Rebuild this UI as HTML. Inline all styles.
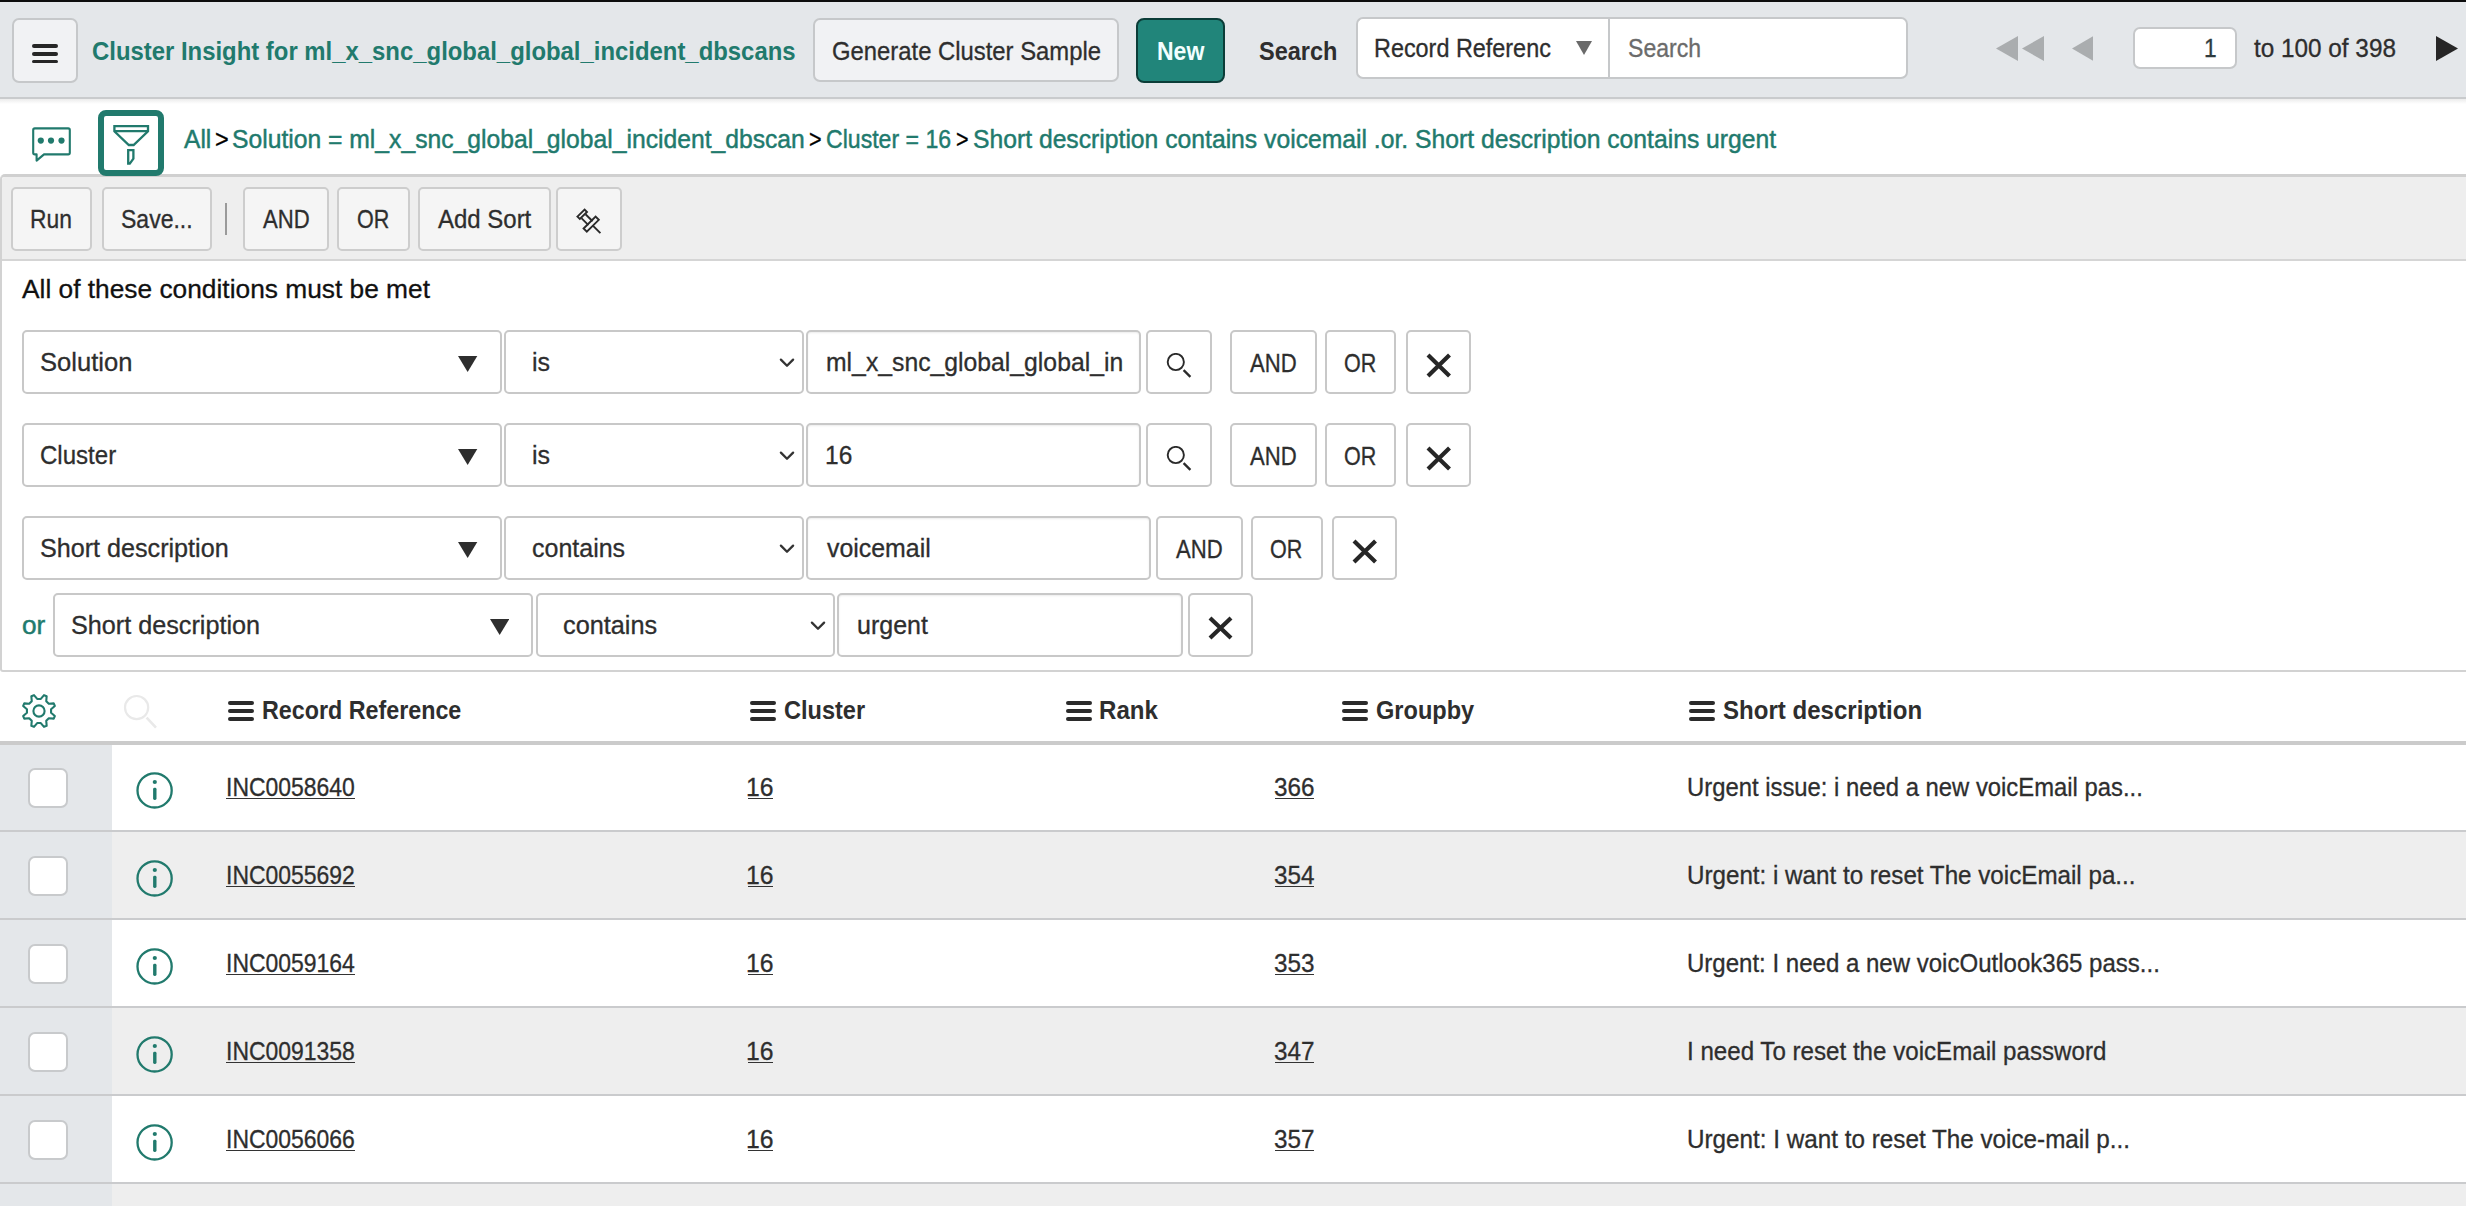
<!DOCTYPE html>
<html><head><meta charset="utf-8"><title>Cluster Insight</title>
<style>html,body{margin:0;padding:0;width:2466px;height:1206px;overflow:hidden;background:#fff;font-family:'Liberation Sans', sans-serif}</style>
</head><body>
<div style="position:relative;width:2466px;height:1206px;overflow:hidden">
<div style="position:absolute;left:0px;top:0px;width:2466px;height:2px;box-sizing:border-box;background:#0d0d0d"></div>
<div style="position:absolute;left:0px;top:2px;width:2466px;height:95px;box-sizing:border-box;background:#e4e7ea"></div>
<div style="position:absolute;left:0px;top:97px;width:2466px;height:2px;box-sizing:border-box;background:#c9cbcd"></div>
<div style="position:absolute;left:0px;top:99px;width:2466px;height:5px;box-sizing:border-box;background:linear-gradient(#ececec,#ffffff)"></div>
<div style="position:absolute;left:12px;top:18px;width:66px;height:65px;box-sizing:border-box;background:#f1f2f4;border:2px solid #c6c8ca;border-radius:7px"></div>
<div style="position:absolute;left:32px;top:44px;width:26px;height:3.6000000000000014px;box-sizing:border-box;background:#262626;border-radius:2px"></div>
<div style="position:absolute;left:32px;top:52px;width:26px;height:3.6000000000000014px;box-sizing:border-box;background:#262626;border-radius:2px"></div>
<div style="position:absolute;left:32px;top:59.6px;width:26px;height:3.6000000000000014px;box-sizing:border-box;background:#262626;border-radius:2px"></div>
<div style="position:absolute;left:813px;top:18px;width:306px;height:64px;box-sizing:border-box;background:#f1f2f4;border:2px solid #c6c8ca;border-radius:7px"></div>
<div style="position:absolute;left:1136px;top:18px;width:89px;height:65px;box-sizing:border-box;background:#21857a;border:2px solid #0b3d38;border-radius:8px"></div>
<div style="position:absolute;left:1356px;top:17px;width:254px;height:62px;box-sizing:border-box;background:#fff;border:2px solid #c6c8ca;border-right:none;border-radius:7px 0 0 7px"></div>
<div style="position:absolute;left:1608px;top:17px;width:300px;height:62px;box-sizing:border-box;background:#fff;border:2px solid #c6c8ca;border-radius:0 7px 7px 0"></div>
<svg style="position:absolute;left:1576px;top:41px" width="16" height="14"><polygon points="0,0 16,0 8.0,14" fill="#6a6a6a"/></svg>
<svg style="position:absolute;left:1996px;top:35.5px" width="22" height="25.0"><polygon points="22,0 22,25.0 0,12.5" fill="#aaadaf"/></svg>
<svg style="position:absolute;left:2022px;top:35.5px" width="22" height="25.0"><polygon points="22,0 22,25.0 0,12.5" fill="#aaadaf"/></svg>
<svg style="position:absolute;left:2071.5px;top:35.5px" width="21.5" height="25.0"><polygon points="21.5,0 21.5,25.0 0,12.5" fill="#aaadaf"/></svg>
<div style="position:absolute;left:2133px;top:27px;width:104px;height:42px;box-sizing:border-box;background:#fff;border:2px solid #c6c8ca;border-radius:7px"></div>
<svg style="position:absolute;left:2436px;top:36px" width="22" height="25"><polygon points="0,0 0,25 22,12.5" fill="#262626"/></svg>
<svg style="position:absolute;left:28px;top:124px" width="48" height="42" viewBox="28 124 48 42">
<path d="M34.8 128.4 H68.2 Q69.8 128.4 69.8 130 V152.8 Q69.8 154.4 68.2 154.4 H44 L36.6 160.6 V154.4 H34.8 Q33.2 154.4 33.2 152.8 V130 Q33.2 128.4 34.8 128.4 Z" fill="none" stroke="#217a6d" stroke-width="2.1" stroke-linejoin="round"/>
<circle cx="40.8" cy="140.6" r="3.1" fill="#217a6d"/><circle cx="51" cy="140.6" r="3.1" fill="#217a6d"/><circle cx="61.5" cy="140.6" r="3.1" fill="#217a6d"/>
</svg>
<div style="position:absolute;left:98px;top:110px;width:66px;height:66px;box-sizing:border-box;background:#fff;border:6px solid #217a6d;border-radius:8px;z-index:2"></div>
<svg style="position:absolute;left:98px;top:110px;z-index:3" width="66" height="66" viewBox="98 110 66 66">
<path d="M114.4 126.1 H148 V131.3 L133.6 145 H128.8 L114.4 131.3 Z" fill="none" stroke="#217a6d" stroke-width="2.3" stroke-linejoin="miter"/>
<line x1="114.4" y1="131.1" x2="148" y2="131.1" stroke="#217a6d" stroke-width="2.3"/>
<path d="M128.2 150.2 H133.4 V158.6 L129.8 163.6 H128.2 Z" fill="none" stroke="#217a6d" stroke-width="2.3"/>
</svg>
<div style="position:absolute;left:0px;top:174px;width:2500px;height:498px;box-sizing:border-box;background:#fff;border:2px solid #d2d2d2;border-top:3px solid #d0d0d0;border-radius:5px 0 0 3px"></div>
<div style="position:absolute;left:2px;top:177px;width:2498px;height:82px;box-sizing:border-box;background:#eeeeee;border-radius:3px 0 0 0"></div>
<div style="position:absolute;left:2px;top:259px;width:2498px;height:2px;box-sizing:border-box;background:#d5d5d5"></div>
<div style="position:absolute;left:11px;top:187px;width:81px;height:64px;box-sizing:border-box;background:#f5f5f5;border:2px solid #cdcdcd;border-radius:5px"></div>
<div style="position:absolute;left:102px;top:187px;width:110px;height:64px;box-sizing:border-box;background:#f5f5f5;border:2px solid #cdcdcd;border-radius:5px"></div>
<div style="position:absolute;left:243px;top:187px;width:86px;height:64px;box-sizing:border-box;background:#f5f5f5;border:2px solid #cdcdcd;border-radius:5px"></div>
<div style="position:absolute;left:337px;top:187px;width:73px;height:64px;box-sizing:border-box;background:#f5f5f5;border:2px solid #cdcdcd;border-radius:5px"></div>
<div style="position:absolute;left:418px;top:187px;width:133px;height:64px;box-sizing:border-box;background:#f5f5f5;border:2px solid #cdcdcd;border-radius:5px"></div>
<div style="position:absolute;left:556px;top:187px;width:66px;height:64px;box-sizing:border-box;background:#f5f5f5;border:2px solid #cdcdcd;border-radius:5px"></div>
<div style="position:absolute;left:225px;top:203px;width:2px;height:32px;box-sizing:border-box;background:#9a9a9a"></div>
<svg style="position:absolute;left:570px;top:204px" width="36" height="36" viewBox="570 204 36 36">
<g fill="none" stroke="#2a2a2a" stroke-width="1.9" stroke-linejoin="miter">
<path d="M577.4 216.6 L584.6 209.6 L587 212 L579.8 219 Z"/>
<path d="M585.5 214.2 L592.6 221.2"/>
<path d="M581.4 218.2 L588.4 225.2"/>
<path d="M583.6 228.5 L595.6 216.6 L598.8 219.8 L586.8 231.7 Z"/>
<path d="M592.6 225.4 L600.4 233.2"/>
</g></svg>
<div style="position:absolute;left:22px;top:330px;width:480px;height:64px;box-sizing:border-box;background:#fff;border:2px solid #c8c8c8;border-radius:5px"></div>
<svg style="position:absolute;left:458.3px;top:356px" width="19.30000000000001" height="16"><polygon points="0,0 19.30000000000001,0 9.650000000000006,16" fill="#2e2e2e"/></svg>
<div style="position:absolute;left:504px;top:330px;width:300px;height:64px;box-sizing:border-box;background:#fff;border:2px solid #c8c8c8;border-radius:5px"></div>
<svg style="position:absolute;left:778px;top:355px" width="18" height="14"><path d="M2.9 4.6 L9 10.8 L15.1 4.6" fill="none" stroke="#333" stroke-width="2.3" stroke-linecap="round" stroke-linejoin="round"/></svg>
<div style="position:absolute;left:806px;top:330px;width:335px;height:64px;box-sizing:border-box;background:#fff;border:2px solid #c8c8c8;border-radius:5px;box-shadow:inset 0 1px 2px rgba(0,0,0,.08)"></div>
<div style="position:absolute;left:1146px;top:330px;width:66px;height:64px;box-sizing:border-box;background:#fff;border:2px solid #c8c8c8;border-radius:5px"></div>
<svg style="position:absolute;left:1165px;top:353px" width="30" height="30" viewBox="0 0 30 30"><circle cx="10.8" cy="9" r="8.1" fill="none" stroke="#2a2a2a" stroke-width="1.9"/><path d="M18.6 17.1 L25.4 23.9" stroke="#2a2a2a" stroke-width="2.3"/></svg>
<div style="position:absolute;left:1230px;top:330px;width:87px;height:64px;box-sizing:border-box;background:#fff;border:2px solid #c8c8c8;border-radius:5px"></div>
<div style="position:absolute;left:1325px;top:330px;width:71px;height:64px;box-sizing:border-box;background:#fff;border:2px solid #c8c8c8;border-radius:5px"></div>
<div style="position:absolute;left:1406px;top:330px;width:65px;height:64px;box-sizing:border-box;background:#fff;border:2px solid #c8c8c8;border-radius:5px"></div>
<svg style="position:absolute;left:1425.5px;top:352.5px" width="25.5" height="25.0"><path d="M2 2 L23.5 23.0 M23.5 2 L2 23.0" stroke="#262626" stroke-width="4.2" stroke-linecap="butt"/></svg>
<div style="position:absolute;left:22px;top:423px;width:480px;height:64px;box-sizing:border-box;background:#fff;border:2px solid #c8c8c8;border-radius:5px"></div>
<svg style="position:absolute;left:458.3px;top:449px" width="19.30000000000001" height="16"><polygon points="0,0 19.30000000000001,0 9.650000000000006,16" fill="#2e2e2e"/></svg>
<div style="position:absolute;left:504px;top:423px;width:300px;height:64px;box-sizing:border-box;background:#fff;border:2px solid #c8c8c8;border-radius:5px"></div>
<svg style="position:absolute;left:778px;top:448px" width="18" height="14"><path d="M2.9 4.6 L9 10.8 L15.1 4.6" fill="none" stroke="#333" stroke-width="2.3" stroke-linecap="round" stroke-linejoin="round"/></svg>
<div style="position:absolute;left:806px;top:423px;width:335px;height:64px;box-sizing:border-box;background:#fff;border:2px solid #c8c8c8;border-radius:5px;box-shadow:inset 0 1px 2px rgba(0,0,0,.08)"></div>
<div style="position:absolute;left:1146px;top:423px;width:66px;height:64px;box-sizing:border-box;background:#fff;border:2px solid #c8c8c8;border-radius:5px"></div>
<svg style="position:absolute;left:1165px;top:446px" width="30" height="30" viewBox="0 0 30 30"><circle cx="10.8" cy="9" r="8.1" fill="none" stroke="#2a2a2a" stroke-width="1.9"/><path d="M18.6 17.1 L25.4 23.9" stroke="#2a2a2a" stroke-width="2.3"/></svg>
<div style="position:absolute;left:1230px;top:423px;width:87px;height:64px;box-sizing:border-box;background:#fff;border:2px solid #c8c8c8;border-radius:5px"></div>
<div style="position:absolute;left:1325px;top:423px;width:71px;height:64px;box-sizing:border-box;background:#fff;border:2px solid #c8c8c8;border-radius:5px"></div>
<div style="position:absolute;left:1406px;top:423px;width:65px;height:64px;box-sizing:border-box;background:#fff;border:2px solid #c8c8c8;border-radius:5px"></div>
<svg style="position:absolute;left:1425.5px;top:445.5px" width="25.5" height="25.0"><path d="M2 2 L23.5 23.0 M23.5 2 L2 23.0" stroke="#262626" stroke-width="4.2" stroke-linecap="butt"/></svg>
<div style="position:absolute;left:22px;top:516px;width:480px;height:64px;box-sizing:border-box;background:#fff;border:2px solid #c8c8c8;border-radius:5px"></div>
<svg style="position:absolute;left:458.3px;top:542px" width="19.30000000000001" height="16"><polygon points="0,0 19.30000000000001,0 9.650000000000006,16" fill="#2e2e2e"/></svg>
<div style="position:absolute;left:504px;top:516px;width:300px;height:64px;box-sizing:border-box;background:#fff;border:2px solid #c8c8c8;border-radius:5px"></div>
<svg style="position:absolute;left:778px;top:541px" width="18" height="14"><path d="M2.9 4.6 L9 10.8 L15.1 4.6" fill="none" stroke="#333" stroke-width="2.3" stroke-linecap="round" stroke-linejoin="round"/></svg>
<div style="position:absolute;left:806px;top:516px;width:345px;height:64px;box-sizing:border-box;background:#fff;border:2px solid #c8c8c8;border-radius:5px;box-shadow:inset 0 1px 2px rgba(0,0,0,.08)"></div>
<div style="position:absolute;left:1156px;top:516px;width:87px;height:64px;box-sizing:border-box;background:#fff;border:2px solid #c8c8c8;border-radius:5px"></div>
<div style="position:absolute;left:1251px;top:516px;width:72px;height:64px;box-sizing:border-box;background:#fff;border:2px solid #c8c8c8;border-radius:5px"></div>
<div style="position:absolute;left:1332px;top:516px;width:65px;height:64px;box-sizing:border-box;background:#fff;border:2px solid #c8c8c8;border-radius:5px"></div>
<svg style="position:absolute;left:1351.5px;top:538.5px" width="25.5" height="25.0"><path d="M2 2 L23.5 23.0 M23.5 2 L2 23.0" stroke="#262626" stroke-width="4.2" stroke-linecap="butt"/></svg>
<div style="position:absolute;left:53px;top:593px;width:480px;height:64px;box-sizing:border-box;background:#fff;border:2px solid #c8c8c8;border-radius:5px"></div>
<svg style="position:absolute;left:489.5px;top:619px" width="19.30000000000001" height="16"><polygon points="0,0 19.30000000000001,0 9.650000000000006,16" fill="#2e2e2e"/></svg>
<div style="position:absolute;left:536px;top:593px;width:299px;height:64px;box-sizing:border-box;background:#fff;border:2px solid #c8c8c8;border-radius:5px"></div>
<svg style="position:absolute;left:809px;top:618px" width="18" height="14"><path d="M2.9 4.6 L9 10.8 L15.1 4.6" fill="none" stroke="#333" stroke-width="2.3" stroke-linecap="round" stroke-linejoin="round"/></svg>
<div style="position:absolute;left:837px;top:593px;width:346px;height:64px;box-sizing:border-box;background:#fff;border:2px solid #c8c8c8;border-radius:5px;box-shadow:inset 0 1px 2px rgba(0,0,0,.08)"></div>
<div style="position:absolute;left:1188px;top:593px;width:65px;height:64px;box-sizing:border-box;background:#fff;border:2px solid #c8c8c8;border-radius:5px"></div>
<svg style="position:absolute;left:1208px;top:616px" width="25" height="24"><path d="M2 2 L23 22 M23 2 L2 22" stroke="#262626" stroke-width="4.2" stroke-linecap="butt"/></svg>
<svg style="position:absolute;left:18px;top:690px" width="42" height="42" viewBox="-21 -21 42 42">
<path d="M11.84 -2.94 L16.54 -1.43 L16.54 1.43 L11.84 2.94 L10.45 6.29 L12.71 10.68 L10.68 12.71 L6.29 10.45 L2.94 11.84 L1.43 16.54 L-1.43 16.54 L-2.94 11.84 L-6.29 10.45 L-10.68 12.71 L-12.71 10.68 L-10.45 6.29 L-11.84 2.94 L-16.54 1.43 L-16.54 -1.43 L-11.84 -2.94 L-10.45 -6.29 L-12.71 -10.68 L-10.68 -12.71 L-6.29 -10.45 L-2.94 -11.84 L-1.43 -16.54 L1.43 -16.54 L2.94 -11.84 L6.29 -10.45 L10.68 -12.71 L12.71 -10.68 L10.45 -6.29 Z" fill="none" stroke="#217a6d" stroke-width="2.1" stroke-linejoin="round" transform="rotate(22.5)"/>
<circle cx="0" cy="0" r="5.6" fill="none" stroke="#217a6d" stroke-width="2.1"/>
</svg>
<svg style="position:absolute;left:122px;top:694px" width="40" height="40" viewBox="0 0 40 40"><circle cx="14.6" cy="13.6" r="11.6" fill="none" stroke="#e9e9e9" stroke-width="2.2"/><path d="M24.6 23.6 L34 33.6" stroke="#e9e9e9" stroke-width="2.6"/></svg>
<div style="position:absolute;left:228px;top:701.4px;width:26px;height:3.8999999999999773px;box-sizing:border-box;background:#2b2b2b;border-radius:2px"></div>
<div style="position:absolute;left:228px;top:709.3px;width:26px;height:3.8999999999999773px;box-sizing:border-box;background:#2b2b2b;border-radius:2px"></div>
<div style="position:absolute;left:228px;top:717.1999999999999px;width:26px;height:3.8999999999999773px;box-sizing:border-box;background:#2b2b2b;border-radius:2px"></div>
<div style="position:absolute;left:750px;top:701.4px;width:26px;height:3.8999999999999773px;box-sizing:border-box;background:#2b2b2b;border-radius:2px"></div>
<div style="position:absolute;left:750px;top:709.3px;width:26px;height:3.8999999999999773px;box-sizing:border-box;background:#2b2b2b;border-radius:2px"></div>
<div style="position:absolute;left:750px;top:717.1999999999999px;width:26px;height:3.8999999999999773px;box-sizing:border-box;background:#2b2b2b;border-radius:2px"></div>
<div style="position:absolute;left:1066px;top:701.4px;width:26px;height:3.8999999999999773px;box-sizing:border-box;background:#2b2b2b;border-radius:2px"></div>
<div style="position:absolute;left:1066px;top:709.3px;width:26px;height:3.8999999999999773px;box-sizing:border-box;background:#2b2b2b;border-radius:2px"></div>
<div style="position:absolute;left:1066px;top:717.1999999999999px;width:26px;height:3.8999999999999773px;box-sizing:border-box;background:#2b2b2b;border-radius:2px"></div>
<div style="position:absolute;left:1342px;top:701.4px;width:26px;height:3.8999999999999773px;box-sizing:border-box;background:#2b2b2b;border-radius:2px"></div>
<div style="position:absolute;left:1342px;top:709.3px;width:26px;height:3.8999999999999773px;box-sizing:border-box;background:#2b2b2b;border-radius:2px"></div>
<div style="position:absolute;left:1342px;top:717.1999999999999px;width:26px;height:3.8999999999999773px;box-sizing:border-box;background:#2b2b2b;border-radius:2px"></div>
<div style="position:absolute;left:1689px;top:701.4px;width:26px;height:3.8999999999999773px;box-sizing:border-box;background:#2b2b2b;border-radius:2px"></div>
<div style="position:absolute;left:1689px;top:709.3px;width:26px;height:3.8999999999999773px;box-sizing:border-box;background:#2b2b2b;border-radius:2px"></div>
<div style="position:absolute;left:1689px;top:717.1999999999999px;width:26px;height:3.8999999999999773px;box-sizing:border-box;background:#2b2b2b;border-radius:2px"></div>
<div style="position:absolute;left:0px;top:741px;width:2466px;height:4px;box-sizing:border-box;background:#cbcbcb"></div>
<div style="position:absolute;left:0px;top:745px;width:2466px;height:85px;box-sizing:border-box;background:#ffffff"></div>
<div style="position:absolute;left:0px;top:745px;width:112px;height:85px;box-sizing:border-box;background:#e4e7ea"></div>
<div style="position:absolute;left:0px;top:830px;width:2466px;height:2px;box-sizing:border-box;background:#cacbcd"></div>
<div style="position:absolute;left:28px;top:768px;width:40px;height:40px;box-sizing:border-box;background:#fff;border:2px solid #c8cacc;border-radius:7px"></div>
<svg style="position:absolute;left:134px;top:770px" width="42" height="42" viewBox="0 0 42 42"><circle cx="20.6" cy="20.4" r="17.1" fill="none" stroke="#217a6d" stroke-width="2.3"/><circle cx="20.8" cy="12" r="2.1" fill="#217a6d"/><rect x="19.1" y="17.8" width="3.4" height="12.2" rx="1.4" fill="#217a6d"/></svg>
<div style="position:absolute;left:226px;top:798.1999999999999px;width:129px;height:1.3000000000000682px;box-sizing:border-box;background:#333"></div>
<div style="position:absolute;left:748px;top:798.1999999999999px;width:25px;height:1.3000000000000682px;box-sizing:border-box;background:#333"></div>
<div style="position:absolute;left:1275px;top:798.1999999999999px;width:39px;height:1.3000000000000682px;box-sizing:border-box;background:#333"></div>
<div style="position:absolute;left:0px;top:832px;width:2466px;height:86px;box-sizing:border-box;background:#eeeeee"></div>
<div style="position:absolute;left:0px;top:832px;width:112px;height:86px;box-sizing:border-box;background:#e4e7ea"></div>
<div style="position:absolute;left:0px;top:918px;width:2466px;height:2px;box-sizing:border-box;background:#cacbcd"></div>
<div style="position:absolute;left:28px;top:856px;width:40px;height:40px;box-sizing:border-box;background:#fff;border:2px solid #c8cacc;border-radius:7px"></div>
<svg style="position:absolute;left:134px;top:858px" width="42" height="42" viewBox="0 0 42 42"><circle cx="20.6" cy="20.4" r="17.1" fill="none" stroke="#217a6d" stroke-width="2.3"/><circle cx="20.8" cy="12" r="2.1" fill="#217a6d"/><rect x="19.1" y="17.8" width="3.4" height="12.2" rx="1.4" fill="#217a6d"/></svg>
<div style="position:absolute;left:226px;top:886.1999999999999px;width:129px;height:1.3000000000000682px;box-sizing:border-box;background:#333"></div>
<div style="position:absolute;left:748px;top:886.1999999999999px;width:25px;height:1.3000000000000682px;box-sizing:border-box;background:#333"></div>
<div style="position:absolute;left:1275px;top:886.1999999999999px;width:39px;height:1.3000000000000682px;box-sizing:border-box;background:#333"></div>
<div style="position:absolute;left:0px;top:920px;width:2466px;height:86px;box-sizing:border-box;background:#ffffff"></div>
<div style="position:absolute;left:0px;top:920px;width:112px;height:86px;box-sizing:border-box;background:#e4e7ea"></div>
<div style="position:absolute;left:0px;top:1006px;width:2466px;height:2px;box-sizing:border-box;background:#cacbcd"></div>
<div style="position:absolute;left:28px;top:944px;width:40px;height:40px;box-sizing:border-box;background:#fff;border:2px solid #c8cacc;border-radius:7px"></div>
<svg style="position:absolute;left:134px;top:946px" width="42" height="42" viewBox="0 0 42 42"><circle cx="20.6" cy="20.4" r="17.1" fill="none" stroke="#217a6d" stroke-width="2.3"/><circle cx="20.8" cy="12" r="2.1" fill="#217a6d"/><rect x="19.1" y="17.8" width="3.4" height="12.2" rx="1.4" fill="#217a6d"/></svg>
<div style="position:absolute;left:226px;top:974.1999999999999px;width:129px;height:1.3000000000000682px;box-sizing:border-box;background:#333"></div>
<div style="position:absolute;left:748px;top:974.1999999999999px;width:25px;height:1.3000000000000682px;box-sizing:border-box;background:#333"></div>
<div style="position:absolute;left:1275px;top:974.1999999999999px;width:39px;height:1.3000000000000682px;box-sizing:border-box;background:#333"></div>
<div style="position:absolute;left:0px;top:1008px;width:2466px;height:86px;box-sizing:border-box;background:#eeeeee"></div>
<div style="position:absolute;left:0px;top:1008px;width:112px;height:86px;box-sizing:border-box;background:#e4e7ea"></div>
<div style="position:absolute;left:0px;top:1094px;width:2466px;height:2px;box-sizing:border-box;background:#cacbcd"></div>
<div style="position:absolute;left:28px;top:1032px;width:40px;height:40px;box-sizing:border-box;background:#fff;border:2px solid #c8cacc;border-radius:7px"></div>
<svg style="position:absolute;left:134px;top:1034px" width="42" height="42" viewBox="0 0 42 42"><circle cx="20.6" cy="20.4" r="17.1" fill="none" stroke="#217a6d" stroke-width="2.3"/><circle cx="20.8" cy="12" r="2.1" fill="#217a6d"/><rect x="19.1" y="17.8" width="3.4" height="12.2" rx="1.4" fill="#217a6d"/></svg>
<div style="position:absolute;left:226px;top:1062.2px;width:129px;height:1.2999999999999545px;box-sizing:border-box;background:#333"></div>
<div style="position:absolute;left:748px;top:1062.2px;width:25px;height:1.2999999999999545px;box-sizing:border-box;background:#333"></div>
<div style="position:absolute;left:1275px;top:1062.2px;width:39px;height:1.2999999999999545px;box-sizing:border-box;background:#333"></div>
<div style="position:absolute;left:0px;top:1096px;width:2466px;height:86px;box-sizing:border-box;background:#ffffff"></div>
<div style="position:absolute;left:0px;top:1096px;width:112px;height:86px;box-sizing:border-box;background:#e4e7ea"></div>
<div style="position:absolute;left:0px;top:1182px;width:2466px;height:2px;box-sizing:border-box;background:#cacbcd"></div>
<div style="position:absolute;left:28px;top:1120px;width:40px;height:40px;box-sizing:border-box;background:#fff;border:2px solid #c8cacc;border-radius:7px"></div>
<svg style="position:absolute;left:134px;top:1122px" width="42" height="42" viewBox="0 0 42 42"><circle cx="20.6" cy="20.4" r="17.1" fill="none" stroke="#217a6d" stroke-width="2.3"/><circle cx="20.8" cy="12" r="2.1" fill="#217a6d"/><rect x="19.1" y="17.8" width="3.4" height="12.2" rx="1.4" fill="#217a6d"/></svg>
<div style="position:absolute;left:226px;top:1150.2px;width:129px;height:1.2999999999999545px;box-sizing:border-box;background:#333"></div>
<div style="position:absolute;left:748px;top:1150.2px;width:25px;height:1.2999999999999545px;box-sizing:border-box;background:#333"></div>
<div style="position:absolute;left:1275px;top:1150.2px;width:39px;height:1.2999999999999545px;box-sizing:border-box;background:#333"></div>
<div style="position:absolute;left:0px;top:1184px;width:2466px;height:22px;box-sizing:border-box;background:#eeeeee"></div>
<div style="position:absolute;left:0px;top:1184px;width:112px;height:22px;box-sizing:border-box;background:#e4e7ea"></div>
<span style="position:absolute;left:92.08px;top:37.90px;font:bold 26px/26px 'Liberation Sans', sans-serif;color:#217a6d;white-space:pre;transform-origin:0 0;transform:scaleX(0.9188)">Cluster Insight for ml_x_snc_global_global_incident_dbscans</span>
<span style="position:absolute;left:832.05px;top:38.75px;font:normal 25px/25px 'Liberation Sans', sans-serif;color:#2e2e2e;white-space:pre;transform-origin:0 0;transform:scaleX(0.9536);-webkit-text-stroke:0.3px #2e2e2e">Generate Cluster Sample</span>
<span style="position:absolute;left:1156.73px;top:37.90px;font:bold 26px/26px 'Liberation Sans', sans-serif;color:#f2ffff;white-space:pre;transform-origin:0 0;transform:scaleX(0.8846)">New</span>
<span style="position:absolute;left:1259.10px;top:37.90px;font:bold 26px/26px 'Liberation Sans', sans-serif;color:#2e2e2e;white-space:pre;transform-origin:0 0;transform:scaleX(0.9048)">Search</span>
<span style="position:absolute;left:1374.13px;top:35.75px;font:normal 25px/25px 'Liberation Sans', sans-serif;color:#2e2e2e;white-space:pre;transform-origin:0 0;transform:scaleX(0.9358);-webkit-text-stroke:0.3px #2e2e2e">Record Referenc</span>
<span style="position:absolute;left:1628.08px;top:35.75px;font:normal 25px/25px 'Liberation Sans', sans-serif;color:#6b6b6b;white-space:pre;transform-origin:0 0;transform:scaleX(0.9221);-webkit-text-stroke:0.3px #6b6b6b">Search</span>
<span style="position:absolute;left:2204.18px;top:35.75px;font:normal 25px/25px 'Liberation Sans', sans-serif;color:#2f3b3e;white-space:pre;transform-origin:0 0;transform:scaleX(0.9091);-webkit-text-stroke:0.3px #2f3b3e">1</span>
<span style="position:absolute;left:2254.00px;top:35.75px;font:normal 25px/25px 'Liberation Sans', sans-serif;color:#2e2e2e;white-space:pre;transform-origin:0 0;transform:scaleX(0.9724);-webkit-text-stroke:0.3px #2e2e2e">to 100 of 398</span>
<span style="position:absolute;left:184.00px;top:127.33px;font:normal 25.5px/25.5px 'Liberation Sans', sans-serif;color:#217a6d;white-space:pre;transform-origin:0 0;transform:scaleX(0.9630);-webkit-text-stroke:0.45px #217a6d">All</span>
<span style="position:absolute;left:215.08px;top:127.33px;font:normal 25.5px/25.5px 'Liberation Sans', sans-serif;color:#000;white-space:pre;transform-origin:0 0;transform:scaleX(0.9231);-webkit-text-stroke:0.3px #000">&gt;</span>
<span style="position:absolute;left:232.03px;top:127.33px;font:normal 25.5px/25.5px 'Liberation Sans', sans-serif;color:#217a6d;white-space:pre;transform-origin:0 0;transform:scaleX(0.9678);-webkit-text-stroke:0.45px #217a6d">Solution = ml_x_snc_global_global_incident_dbscan</span>
<span style="position:absolute;left:809.15px;top:127.33px;font:normal 25.5px/25.5px 'Liberation Sans', sans-serif;color:#000;white-space:pre;transform-origin:0 0;transform:scaleX(0.8462);-webkit-text-stroke:0.3px #000">&gt;</span>
<span style="position:absolute;left:826.09px;top:127.33px;font:normal 25.5px/25.5px 'Liberation Sans', sans-serif;color:#217a6d;white-space:pre;transform-origin:0 0;transform:scaleX(0.9051);-webkit-text-stroke:0.45px #217a6d">Cluster = 16</span>
<span style="position:absolute;left:956.15px;top:127.33px;font:normal 25.5px/25.5px 'Liberation Sans', sans-serif;color:#000;white-space:pre;transform-origin:0 0;transform:scaleX(0.8462);-webkit-text-stroke:0.3px #000">&gt;</span>
<span style="position:absolute;left:973.03px;top:127.33px;font:normal 25.5px/25.5px 'Liberation Sans', sans-serif;color:#217a6d;white-space:pre;transform-origin:0 0;transform:scaleX(0.9686);-webkit-text-stroke:0.45px #217a6d">Short description contains voicemail .or. Short description contains urgent</span>
<span style="position:absolute;left:30.27px;top:206.75px;font:normal 25px/25px 'Liberation Sans', sans-serif;color:#2e2e2e;white-space:pre;transform-origin:0 0;transform:scaleX(0.9140);-webkit-text-stroke:0.3px #2e2e2e">Run</span>
<span style="position:absolute;left:121.08px;top:206.75px;font:normal 25px/25px 'Liberation Sans', sans-serif;color:#2e2e2e;white-space:pre;transform-origin:0 0;transform:scaleX(0.9200);-webkit-text-stroke:0.3px #2e2e2e">Save...</span>
<span style="position:absolute;left:263.00px;top:206.75px;font:normal 25px/25px 'Liberation Sans', sans-serif;color:#2e2e2e;white-space:pre;transform-origin:0 0;transform:scaleX(0.8846);-webkit-text-stroke:0.3px #2e2e2e">AND</span>
<span style="position:absolute;left:357.14px;top:206.75px;font:normal 25px/25px 'Liberation Sans', sans-serif;color:#2e2e2e;white-space:pre;transform-origin:0 0;transform:scaleX(0.8611);-webkit-text-stroke:0.3px #2e2e2e">OR</span>
<span style="position:absolute;left:438.00px;top:206.75px;font:normal 25px/25px 'Liberation Sans', sans-serif;color:#2e2e2e;white-space:pre;transform-origin:0 0;transform:scaleX(0.9588);-webkit-text-stroke:0.3px #2e2e2e">Add Sort</span>
<span style="position:absolute;left:22.20px;top:276.38px;font:normal 26.5px/26.5px 'Liberation Sans', sans-serif;color:#111;white-space:pre;transform-origin:0 0;transform:scaleX(0.9927);-webkit-text-stroke:0.3px #111">All of these conditions must be met</span>
<span style="position:absolute;left:39.98px;top:349.75px;font:normal 25px/25px 'Liberation Sans', sans-serif;color:#2e2e2e;white-space:pre;transform-origin:0 0;transform:scaleX(1.0227);-webkit-text-stroke:0.3px #2e2e2e">Solution</span>
<span style="position:absolute;left:532.00px;top:349.75px;font:normal 25px/25px 'Liberation Sans', sans-serif;color:#2e2e2e;white-space:pre;transform-origin:0 0;transform:scaleX(1.0000);-webkit-text-stroke:0.3px #2e2e2e">is</span>
<span style="position:absolute;left:826.01px;top:349.75px;font:normal 25px/25px 'Liberation Sans', sans-serif;color:#2e2e2e;white-space:pre;transform-origin:0 0;transform:scaleX(0.9899);-webkit-text-stroke:0.3px #2e2e2e">ml_x_snc_global_global_in</span>
<span style="position:absolute;left:1250.00px;top:350.95px;font:normal 25px/25px 'Liberation Sans', sans-serif;color:#2e2e2e;white-space:pre;transform-origin:0 0;transform:scaleX(0.8846);-webkit-text-stroke:0.3px #2e2e2e">AND</span>
<span style="position:absolute;left:1344.14px;top:350.95px;font:normal 25px/25px 'Liberation Sans', sans-serif;color:#2e2e2e;white-space:pre;transform-origin:0 0;transform:scaleX(0.8611);-webkit-text-stroke:0.3px #2e2e2e">OR</span>
<span style="position:absolute;left:40.04px;top:442.75px;font:normal 25px/25px 'Liberation Sans', sans-serif;color:#2e2e2e;white-space:pre;transform-origin:0 0;transform:scaleX(0.9615);-webkit-text-stroke:0.3px #2e2e2e">Cluster</span>
<span style="position:absolute;left:532.00px;top:442.75px;font:normal 25px/25px 'Liberation Sans', sans-serif;color:#2e2e2e;white-space:pre;transform-origin:0 0;transform:scaleX(1.0000);-webkit-text-stroke:0.3px #2e2e2e">is</span>
<span style="position:absolute;left:825.04px;top:442.75px;font:normal 25px/25px 'Liberation Sans', sans-serif;color:#2e2e2e;white-space:pre;transform-origin:0 0;transform:scaleX(0.9800);-webkit-text-stroke:0.3px #2e2e2e">16</span>
<span style="position:absolute;left:1250.00px;top:443.95px;font:normal 25px/25px 'Liberation Sans', sans-serif;color:#2e2e2e;white-space:pre;transform-origin:0 0;transform:scaleX(0.8846);-webkit-text-stroke:0.3px #2e2e2e">AND</span>
<span style="position:absolute;left:1344.14px;top:443.95px;font:normal 25px/25px 'Liberation Sans', sans-serif;color:#2e2e2e;white-space:pre;transform-origin:0 0;transform:scaleX(0.8611);-webkit-text-stroke:0.3px #2e2e2e">OR</span>
<span style="position:absolute;left:39.99px;top:535.75px;font:normal 25px/25px 'Liberation Sans', sans-serif;color:#2e2e2e;white-space:pre;transform-origin:0 0;transform:scaleX(1.0054);-webkit-text-stroke:0.3px #2e2e2e">Short description</span>
<span style="position:absolute;left:532.00px;top:535.75px;font:normal 25px/25px 'Liberation Sans', sans-serif;color:#2e2e2e;white-space:pre;transform-origin:0 0;transform:scaleX(1.0000);-webkit-text-stroke:0.3px #2e2e2e">contains</span>
<span style="position:absolute;left:827.00px;top:535.75px;font:normal 25px/25px 'Liberation Sans', sans-serif;color:#2e2e2e;white-space:pre;transform-origin:0 0;transform:scaleX(0.9951);-webkit-text-stroke:0.3px #2e2e2e">voicemail</span>
<span style="position:absolute;left:1176.00px;top:536.95px;font:normal 25px/25px 'Liberation Sans', sans-serif;color:#2e2e2e;white-space:pre;transform-origin:0 0;transform:scaleX(0.8846);-webkit-text-stroke:0.3px #2e2e2e">AND</span>
<span style="position:absolute;left:1270.14px;top:536.95px;font:normal 25px/25px 'Liberation Sans', sans-serif;color:#2e2e2e;white-space:pre;transform-origin:0 0;transform:scaleX(0.8611);-webkit-text-stroke:0.3px #2e2e2e">OR</span>
<span style="position:absolute;left:22.05px;top:612.75px;font:normal 25px/25px 'Liberation Sans', sans-serif;color:#217a6d;white-space:pre;transform-origin:0 0;transform:scaleX(1.0476);-webkit-text-stroke:0.45px #217a6d">or</span>
<span style="position:absolute;left:70.99px;top:612.75px;font:normal 25px/25px 'Liberation Sans', sans-serif;color:#2e2e2e;white-space:pre;transform-origin:0 0;transform:scaleX(1.0081);-webkit-text-stroke:0.3px #2e2e2e">Short description</span>
<span style="position:absolute;left:562.99px;top:612.75px;font:normal 25px/25px 'Liberation Sans', sans-serif;color:#2e2e2e;white-space:pre;transform-origin:0 0;transform:scaleX(1.0110);-webkit-text-stroke:0.3px #2e2e2e">contains</span>
<span style="position:absolute;left:857.00px;top:612.75px;font:normal 25px/25px 'Liberation Sans', sans-serif;color:#2e2e2e;white-space:pre;transform-origin:0 0;transform:scaleX(1.0000);-webkit-text-stroke:0.3px #2e2e2e">urgent</span>
<span style="position:absolute;left:262.21px;top:696.90px;font:bold 26px/26px 'Liberation Sans', sans-serif;color:#2e2e2e;white-space:pre;transform-origin:0 0;transform:scaleX(0.8955)">Record Reference</span>
<span style="position:absolute;left:784.09px;top:696.90px;font:bold 26px/26px 'Liberation Sans', sans-serif;color:#2e2e2e;white-space:pre;transform-origin:0 0;transform:scaleX(0.9057)">Cluster</span>
<span style="position:absolute;left:1099.15px;top:696.90px;font:bold 26px/26px 'Liberation Sans', sans-serif;color:#2e2e2e;white-space:pre;transform-origin:0 0;transform:scaleX(0.9262)">Rank</span>
<span style="position:absolute;left:1376.09px;top:696.90px;font:bold 26px/26px 'Liberation Sans', sans-serif;color:#2e2e2e;white-space:pre;transform-origin:0 0;transform:scaleX(0.9065)">Groupby</span>
<span style="position:absolute;left:1723.08px;top:696.90px;font:bold 26px/26px 'Liberation Sans', sans-serif;color:#2e2e2e;white-space:pre;transform-origin:0 0;transform:scaleX(0.9249)">Short description</span>
<span style="position:absolute;left:226.16px;top:774.75px;font:normal 25px/25px 'Liberation Sans', sans-serif;color:#2e2e2e;white-space:pre;transform-origin:0 0;transform:scaleX(0.9181);-webkit-text-stroke:0.3px #2e2e2e">INC0058640</span>
<span style="position:absolute;left:746.02px;top:775.05px;font:normal 25px/25px 'Liberation Sans', sans-serif;color:#2e2e2e;white-space:pre;transform-origin:0 0;transform:scaleX(0.9880);-webkit-text-stroke:0.3px #2e2e2e">16</span>
<span style="position:absolute;left:1274.03px;top:775.05px;font:normal 25px/25px 'Liberation Sans', sans-serif;color:#2e2e2e;white-space:pre;transform-origin:0 0;transform:scaleX(0.9700);-webkit-text-stroke:0.3px #2e2e2e">366</span>
<span style="position:absolute;left:1687.09px;top:774.75px;font:normal 25px/25px 'Liberation Sans', sans-serif;color:#2e2e2e;white-space:pre;transform-origin:0 0;transform:scaleX(0.9536);-webkit-text-stroke:0.3px #2e2e2e">Urgent issue: i need a new voicEmail pas...</span>
<span style="position:absolute;left:226.16px;top:862.75px;font:normal 25px/25px 'Liberation Sans', sans-serif;color:#2e2e2e;white-space:pre;transform-origin:0 0;transform:scaleX(0.9181);-webkit-text-stroke:0.3px #2e2e2e">INC0055692</span>
<span style="position:absolute;left:746.02px;top:863.05px;font:normal 25px/25px 'Liberation Sans', sans-serif;color:#2e2e2e;white-space:pre;transform-origin:0 0;transform:scaleX(0.9880);-webkit-text-stroke:0.3px #2e2e2e">16</span>
<span style="position:absolute;left:1274.03px;top:863.05px;font:normal 25px/25px 'Liberation Sans', sans-serif;color:#2e2e2e;white-space:pre;transform-origin:0 0;transform:scaleX(0.9700);-webkit-text-stroke:0.3px #2e2e2e">354</span>
<span style="position:absolute;left:1687.07px;top:862.75px;font:normal 25px/25px 'Liberation Sans', sans-serif;color:#2e2e2e;white-space:pre;transform-origin:0 0;transform:scaleX(0.9674);-webkit-text-stroke:0.3px #2e2e2e">Urgent: i want to reset The voicEmail pa...</span>
<span style="position:absolute;left:226.16px;top:950.75px;font:normal 25px/25px 'Liberation Sans', sans-serif;color:#2e2e2e;white-space:pre;transform-origin:0 0;transform:scaleX(0.9181);-webkit-text-stroke:0.3px #2e2e2e">INC0059164</span>
<span style="position:absolute;left:746.02px;top:951.05px;font:normal 25px/25px 'Liberation Sans', sans-serif;color:#2e2e2e;white-space:pre;transform-origin:0 0;transform:scaleX(0.9880);-webkit-text-stroke:0.3px #2e2e2e">16</span>
<span style="position:absolute;left:1274.03px;top:951.05px;font:normal 25px/25px 'Liberation Sans', sans-serif;color:#2e2e2e;white-space:pre;transform-origin:0 0;transform:scaleX(0.9700);-webkit-text-stroke:0.3px #2e2e2e">353</span>
<span style="position:absolute;left:1687.08px;top:950.75px;font:normal 25px/25px 'Liberation Sans', sans-serif;color:#2e2e2e;white-space:pre;transform-origin:0 0;transform:scaleX(0.9611);-webkit-text-stroke:0.3px #2e2e2e">Urgent: I need a new voicOutlook365 pass...</span>
<span style="position:absolute;left:226.16px;top:1038.75px;font:normal 25px/25px 'Liberation Sans', sans-serif;color:#2e2e2e;white-space:pre;transform-origin:0 0;transform:scaleX(0.9181);-webkit-text-stroke:0.3px #2e2e2e">INC0091358</span>
<span style="position:absolute;left:746.02px;top:1039.05px;font:normal 25px/25px 'Liberation Sans', sans-serif;color:#2e2e2e;white-space:pre;transform-origin:0 0;transform:scaleX(0.9880);-webkit-text-stroke:0.3px #2e2e2e">16</span>
<span style="position:absolute;left:1274.03px;top:1039.05px;font:normal 25px/25px 'Liberation Sans', sans-serif;color:#2e2e2e;white-space:pre;transform-origin:0 0;transform:scaleX(0.9700);-webkit-text-stroke:0.3px #2e2e2e">347</span>
<span style="position:absolute;left:1687.07px;top:1038.75px;font:normal 25px/25px 'Liberation Sans', sans-serif;color:#2e2e2e;white-space:pre;transform-origin:0 0;transform:scaleX(0.9652);-webkit-text-stroke:0.3px #2e2e2e">I need To reset the voicEmail password</span>
<span style="position:absolute;left:226.16px;top:1126.75px;font:normal 25px/25px 'Liberation Sans', sans-serif;color:#2e2e2e;white-space:pre;transform-origin:0 0;transform:scaleX(0.9181);-webkit-text-stroke:0.3px #2e2e2e">INC0056066</span>
<span style="position:absolute;left:746.02px;top:1127.05px;font:normal 25px/25px 'Liberation Sans', sans-serif;color:#2e2e2e;white-space:pre;transform-origin:0 0;transform:scaleX(0.9880);-webkit-text-stroke:0.3px #2e2e2e">16</span>
<span style="position:absolute;left:1274.03px;top:1127.05px;font:normal 25px/25px 'Liberation Sans', sans-serif;color:#2e2e2e;white-space:pre;transform-origin:0 0;transform:scaleX(0.9700);-webkit-text-stroke:0.3px #2e2e2e">357</span>
<span style="position:absolute;left:1687.06px;top:1126.75px;font:normal 25px/25px 'Liberation Sans', sans-serif;color:#2e2e2e;white-space:pre;transform-origin:0 0;transform:scaleX(0.9702);-webkit-text-stroke:0.3px #2e2e2e">Urgent: I want to reset The voice-mail p...</span>
</div></body></html>
